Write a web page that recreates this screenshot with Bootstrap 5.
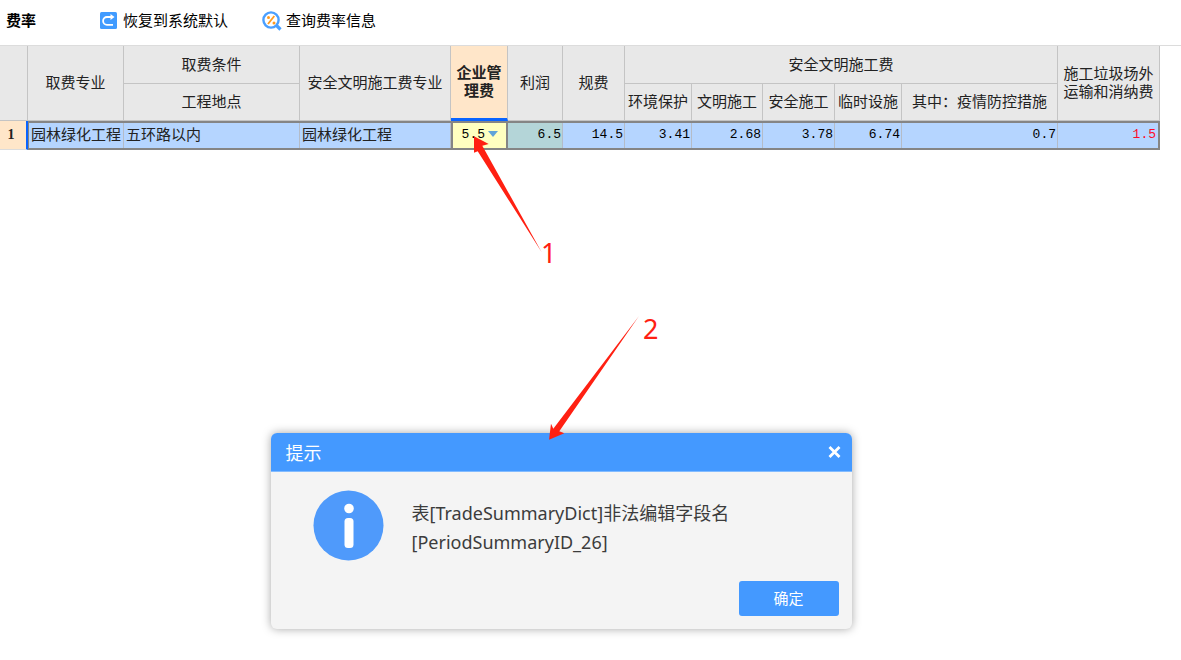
<!DOCTYPE html>
<html lang="zh-CN">
<head>
<meta charset="utf-8">
<meta name="viewport" content="width=device-width, initial-scale=1">
<title>费率</title>
<link href="https://cdn.jsdelivr.net/npm/bootstrap@5.3.0/dist/css/bootstrap.min.css" rel="stylesheet">
<style>
  body { font-family: "Liberation Sans", "Noto Sans CJK SC", sans-serif; font-size: 15px; line-height: 18px; color: #222; background: #fff; }
  .toolbar { height: 46px; padding: 0 6px 4px; border-bottom: 1px solid #dcdcdc; color: #000; }
  .toolbar h1 { font-size: 15px; line-height: 18px; width: 93px; }
  .tool { border: 0; background: none; padding: 0; color: #000; gap: 4px; margin-right: 34px; }

  .sheet-wrap { padding-right: 21px; }
  .sheet { width: 100%; min-width: 1100px; table-layout: fixed; border-collapse: separate; border-spacing: 0; }
  .sheet th, .sheet td { vertical-align: middle; white-space: nowrap; }
  .sheet th { height: 37px; padding: 0; font-weight: 400; text-align: center; background: #e8e8e8; border-right: 1px solid #c4c4c4; border-bottom: 1px solid #c4c4c4; }
  .sheet thead tr:first-child th { height: 38px; }
  .sheet thead .active-head { background: #ffe6c9; font-weight: 700; border-bottom: 3px solid #0a64ff; }
  .sheet tbody th { height: 29px; background: #ffe6c9; border-right: 2px solid #0a64ff; border-bottom-color: #dcdcdc; font: 700 14px "Liberation Serif", serif; padding-right: 4px; }
  .sheet tbody td { height: 29px; padding: 0 2px 2px; background: #b5d5ff; border: solid #858585; border-width: 2px 0; box-shadow: inset -1px 0 #b4bcc8; }
  .sheet .num { font-family: "Liberation Mono", monospace; font-size: 13px; text-align: right; color: #000; }
  .sheet tbody td:nth-child(2) { border-left-width: 1px; }
  .sheet tbody td.current { position: relative; background: #ffffc0; border-width: 2px; box-shadow: none; padding-right: 7px; }
  .sheet tbody td.next { background: #b4d5d8; }
  .sheet tbody td.over { color: #ff0a28; border-right-width: 2px; box-shadow: none; }
  .drop { border: 0; background: none; padding: 0; line-height: 0; margin-left: 2px; }

  .note { position: absolute; z-index: 3; pointer-events: none; fill: #ff2012; font-family: "Noto Sans", sans-serif; font-size: 27px; }
  .note-edit { left: 17px; top: 7px; }
  .note-result { left: 274px; top: -123px; }

  .stage { padding: 283px 59px 24px 0; }
  .alert-box { width: 581px; border-radius: 6px; background: #f4f4f4; box-shadow: 0 0 10px rgba(0,0,0,.35); }
  .alert-head { height: 39px; padding: 0 11px 0 15px; background: #4499ff; color: #fff; border-radius: 6px 6px 0 0; border-bottom: 1px solid #82bbff; }
  .alert-head h2 { font-size: 18px; line-height: 22px; padding-top: 4px; }
  .alert-head button { border: 0; background: none; padding: 0; line-height: 0; }
  .alert-text { padding: 18px 16px 0 42px; gap: 28px; }
  .alert-text p { font-family: "Noto Sans", "Noto Sans CJK SC", sans-serif; font-size: 18px; line-height: 29px; color: #3c3c3c; padding-top: 9px; }
  .alert-foot { padding: 20px 13px 13px; }
  .ok { width: 100px; height: 35px; border: 0; border-radius: 3px; background: #4499ff; color: #fff; font-size: 15px; }
</style>
</head>
<body>
<header class="toolbar d-flex align-items-center">
  <h1 class="fw-bold mb-0">费率</h1>
  <button type="button" class="tool d-flex align-items-center">
    <svg width="20" height="18" viewBox="0 0 20 18" aria-hidden="true"><rect x="1" width="17" height="17" rx="1.500" fill="#409bff"/><path d="M12 5H8a3.700 3.700 0 0 0 0 7.800H14" fill="none" stroke="#fff" stroke-width="1.800"/><path d="M11.500 2l4 3-4 3z" fill="#fff"/></svg>
    <span>恢复到系统默认</span>
  </button>
  <button type="button" class="tool d-flex align-items-center">
    <svg width="20" height="20" viewBox="0 0 20 20" aria-hidden="true"><circle cx="9" cy="9" r="7.600" fill="none" stroke="#4a9fff" stroke-width="2.400"/><path d="M14 14l4.500 4.500" stroke="#4a9fff" stroke-width="3.200"/><path d="M12.300 5L6 13" stroke="#ff9a1f" stroke-width="1.800"/><circle cx="6.500" cy="6.500" r="1.500" fill="#ff9a1f"/><circle cx="12" cy="12" r="1.500" fill="#ff9a1f"/></svg>
    <span>查询费率信息</span>
  </button>
</header>

<main>
  <div class="sheet-wrap">
    <table class="sheet">
      <colgroup>
        <col style="width:28px"><col style="width:96px"><col style="width:176px"><col style="width:151px"><col style="width:57px"><col style="width:55px"><col style="width:62px"><col style="width:67px"><col style="width:71px"><col style="width:72px"><col style="width:67px"><col style="width:156px"><col style="width:102px">
      </colgroup>
      <thead>
        <tr>
          <th rowspan="2"></th>
          <th rowspan="2">取费专业</th>
          <th>取费条件</th>
          <th rowspan="2">安全文明施工费专业</th>
          <th rowspan="2" class="active-head">企业管<br>理费</th>
          <th rowspan="2">利润</th>
          <th rowspan="2">规费</th>
          <th colspan="5">安全文明施工费</th>
          <th rowspan="2">施工垃圾场外<br>运输和消纳费</th>
        </tr>
        <tr>
          <th>工程地点</th>
          <th>环境保护</th>
          <th>文明施工</th>
          <th>安全施工</th>
          <th>临时设施</th>
          <th>其中：疫情防控措施</th>
        </tr>
      </thead>
      <tbody>
        <tr>
          <th scope="row">1</th>
          <td>园林绿化工程</td>
          <td>五环路以内</td>
          <td>园林绿化工程</td>
          <td class="num current">5.5<button type="button" class="drop" aria-label="选择费率"><svg width="12" height="8" viewBox="0 0 12 8"><path d="M1 1h10L6 7z" fill="#5fa3d9"/></svg></button>
            <svg class="note note-edit" width="90" height="140" viewBox="470 130 90 140" aria-hidden="true"><path d="M474 136.300L488.700 144 482.300 145.700 541.700 252.300 477.700 151.300 474 152.700z"/><text x="541" y="263">1</text></svg>
          </td>
          <td class="num next">6.5</td>
          <td class="num">14.5</td>
          <td class="num">3.41</td>
          <td class="num">2.68</td>
          <td class="num">3.78</td>
          <td class="num">6.74</td>
          <td class="num">0.7</td>
          <td class="num over">1.5</td>
        </tr>
      </tbody>
    </table>
  </div>

  <div class="stage d-flex justify-content-center">
    <section class="alert-box position-relative" role="alertdialog" aria-labelledby="alert-title" aria-describedby="alert-message">
      <div class="alert-head d-flex align-items-center justify-content-between">
        <h2 class="fw-normal mb-0" id="alert-title">提示</h2>
        <button type="button" aria-label="关闭"><svg width="13" height="12" viewBox="0 0 13 12"><path d="M1.500 1l10 10M11.500 1l-10 10" stroke="#fff" stroke-width="2.800"/></svg></button>
      </div>
      <div class="alert-text d-flex">
        <svg class="flex-shrink-0" width="71" height="71" viewBox="0 0 71 71" aria-hidden="true"><circle cx="35.500" cy="35.500" r="35" fill="#4f9afb"/><circle cx="36" cy="18.500" r="4.800" fill="#fff"/><rect x="31.500" y="28" width="9" height="30" rx="3.500" fill="#fff"/></svg>
        <p class="mb-0" id="alert-message">表[TradeSummaryDict]非法编辑字段名<br>[PeriodSummaryID_26]</p>
      </div>
      <div class="alert-foot d-flex justify-content-end">
        <button type="button" class="ok">确定</button>
      </div>
      <svg class="note note-result" width="120" height="135" viewBox="545 310 120 135" aria-hidden="true"><path d="M549 439.700L551 423.700 553.300 428.700 639 316 559.300 431.300 564.300 433.300z"/><text x="643" y="339">2</text></svg>
    </section>
  </div>
</main>
<script src="https://cdn.jsdelivr.net/npm/bootstrap@5.3.0/dist/js/bootstrap.bundle.min.js"></script>
</body>
</html>
